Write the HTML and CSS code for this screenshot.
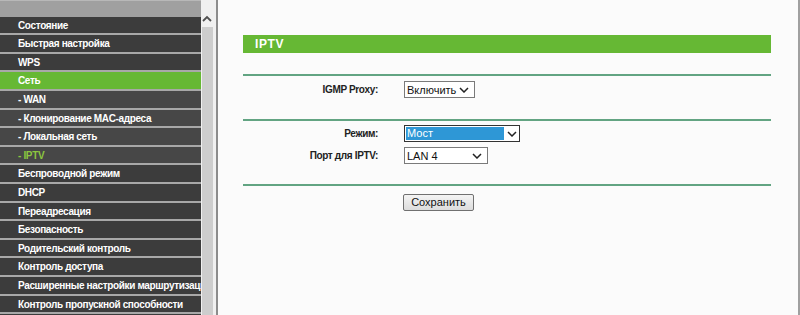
FILE: index.html
```html
<!DOCTYPE html>
<html lang="ru">
<head>
<meta charset="utf-8">
<title>IPTV</title>
<link rel="stylesheet" href="styles.css">
</head>
<body>
<nav class="sidebar">
  <div class="menu-top"></div>
  <div class="menu-item">Состояние</div>
  <div class="menu-item">Быстрая настройка</div>
  <div class="menu-item">WPS</div>
  <div class="menu-item active">Сеть</div>
  <div class="menu-item sub">- WAN</div>
  <div class="menu-item sub">- Клонирование MAC-адреса</div>
  <div class="menu-item sub">- Локальная сеть</div>
  <div class="menu-item sub current">- IPTV</div>
  <div class="menu-item">Беспроводной режим</div>
  <div class="menu-item">DHCP</div>
  <div class="menu-item">Переадресация</div>
  <div class="menu-item">Безопасность</div>
  <div class="menu-item">Родительский контроль</div>
  <div class="menu-item">Контроль доступа</div>
  <div class="menu-item">Расширенные настройки маршрутизации</div>
  <div class="menu-item">Контроль пропускной способности</div>
</nav>
<div class="scrollbar">
  <div class="scroll-up">
    <svg width="10" height="7" viewBox="0 0 10 7"><path d="M1 6 L5 2 L9 6" fill="none" stroke="#505050" stroke-width="1.8"/></svg>
  </div>
  <div class="scroll-thumb"></div>
</div>
<main class="content">
  <div class="title">IPTV</div>
  <div class="rule"></div>
  <div class="section first">
    <div class="form-row">
      <span class="label">IGMP Proxy:</span>
      <div class="select w-igmp"><span class="value">Включить</span><svg class="chev" width="10" height="6" viewBox="0 0 10 6"><path d="M1 1 L5 5 L9 1" fill="none" stroke="#222" stroke-width="1.5"/></svg></div>
    </div>
  </div>
  <div class="rule"></div>
  <div class="section second">
    <div class="form-row">
      <span class="label">Режим:</span>
      <div class="select focused w-mode"><span class="value selected">Мост</span><span class="arrow-box"><svg class="chev" width="10" height="6" viewBox="0 0 10 6"><path d="M1 1 L5 5 L9 1" fill="none" stroke="#222" stroke-width="1.5"/></svg></span></div>
    </div>
    <div class="form-row">
      <span class="label">Порт для IPTV:</span>
      <div class="select w-port"><span class="value">LAN 4</span><svg class="chev" width="10" height="6" viewBox="0 0 10 6"><path d="M1 1 L5 5 L9 1" fill="none" stroke="#222" stroke-width="1.5"/></svg></div>
    </div>
  </div>
  <div class="rule"></div>
  <div class="actions">
    <button class="btn" type="button">Сохранить</button>
  </div>
</main>
</body>
</html>
```
FILE: styles.css
```css
html, body {
  margin: 0;
  padding: 0;
}
body {
  width: 800px;
  height: 315px;
  overflow: hidden;
  display: flex;
  background: #f0f0f0;
  font-family: "Liberation Sans", Arial, sans-serif;
}
.sidebar {
  width: 201px;
  flex: none;
  height: 315px;
  overflow: hidden;
  background: #3c3c3c;
}
.menu-top {
  height: 16.6px;
  background: #a0a0a0;
  border-top: 1px solid #b8b8b8;
  box-sizing: border-box;
}
.menu-item {
  height: 15.6px;
  padding-top: 1px;
  line-height: 16.6px;
  border-bottom: 2px solid #a8a8a8;
  padding-left: 18px;
  font-size: 10px;
  font-weight: bold;
  letter-spacing: -0.35px;
  color: #ffffff;
  white-space: nowrap;
  overflow: hidden;
  background: #3c3c3c;
}
.menu-item.sub {
  background: #474747;
}
.menu-item.active {
  background: #66b834;
}
.menu-item.current {
  color: #8cc63f;
}
.scrollbar {
  width: 12px;
  flex: none;
  display: flex;
  flex-direction: column;
  background: #f0f0f0;
}
.scroll-up {
  height: 27px;
  display: flex;
  justify-content: center;
  padding-top: 15px;
  box-sizing: border-box;
}
.scroll-thumb {
  flex: 1;
  margin-left: 1px;
  background: #cdcdcd;
}
.content {
  flex: 1;
  margin-left: 3px;
  border-left: 2px solid #8c8c8c;
  border-right: 2px solid #a0a0a0;
  background: #fbfbfb;
  padding: 35px 27px 0 25px;
}
.title {
  height: 18px;
  line-height: 18px;
  background: #66b834;
  color: #ffffff;
  font-size: 12px;
  font-weight: bold;
  letter-spacing: 0.6px;
  padding-left: 12px;
}
.rule {
  height: 2px;
  background: #62a482;
  margin-top: 21px;
}
.section + .rule {
  margin-top: 0;
}
.section.first {
  padding: 5px 0 21px;
}
.section.second {
  padding: 4px 0 20px;
  display: grid;
  row-gap: 5px;
}
.form-row {
  display: grid;
  grid-template-columns: 135px auto;
  column-gap: 26px;
  align-items: center;
  height: 17px;
}
.label {
  text-align: right;
  font-size: 10px;
  font-weight: bold;
  letter-spacing: -0.35px;
  color: #222222;
}
.select {
  display: flex;
  align-items: center;
  height: 17px;
  box-sizing: border-box;
  border: 1px solid #7a7a7a;
  background: #ffffff;
  font-size: 11px;
  color: #111111;
}
.select .value {
  flex: 1;
  padding-left: 2px;
}
.select .chev {
  margin-right: 5px;
}
.w-igmp { width: 71px; }
.w-mode { width: 116px; }
.w-port { width: 84px; }
.select.focused {
  border-color: #333333;
  padding: 1px;
}
.select .value.selected {
  background: #2e97d6;
  color: #ffffff;
  height: 100%;
  line-height: 13px;
  padding-left: 1px;
}
.arrow-box {
  width: 14px;
  display: flex;
  justify-content: flex-end;
}
.arrow-box .chev {
  margin-right: 1px;
}
.actions {
  padding-top: 6px;
  padding-left: 160px;
}
.btn {
  width: 71px;
  height: 17px;
  padding: 0;
  border: 1px solid #707070;
  border-radius: 2px;
  background: linear-gradient(#f4f4f4, #dcdcdc);
  font-family: "Liberation Sans", Arial, sans-serif;
  font-size: 11px;
  color: #111111;
}
```
